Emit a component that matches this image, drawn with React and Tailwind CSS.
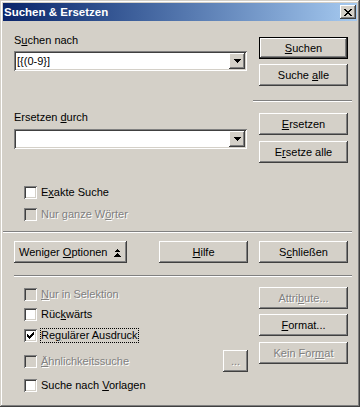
import React from 'react';

const bevel =
  'bg-[#d4d0c8] shadow-[inset_-1px_-1px_0_#404040,inset_1px_1px_0_#fff,inset_-2px_-2px_0_#808080,inset_2px_2px_0_#d4d0c8]';
const sunken =
  'shadow-[inset_1px_1px_0_#808080,inset_-1px_-1px_0_#fff,inset_2px_2px_0_#404040,inset_-2px_-2px_0_#d4d0c8]';
const grayText = 'text-[#808080] [text-shadow:1px_1px_0_#fff]';

function Btn({ children, def, disabled, className = 'w-[89px]' }) {
  return (
    <div
      className={`flex h-[22px] items-center justify-center leading-[13px] ${bevel} ${
        def ? 'border border-black' : ''
      } ${disabled ? grayText : 'text-black'} ${className}`}
    >
      <span className="whitespace-nowrap">{children}</span>
    </div>
  );
}

function Sep({ className = '' }) {
  return <div className={`h-[2px] border-t border-b border-t-[#808080] border-b-white ${className}`} />;
}

function Combo({ value }) {
  return (
    <div className={`flex h-[20px] w-[233px] items-center bg-white ${sunken}`}>
      <span className="flex-1 pl-[3px] leading-[13px]">{value}</span>
      <div className={`mr-[2px] flex h-[16px] w-[16px] items-center justify-center ${bevel}`}>
        <svg width="7" height="4" viewBox="0 0 7 4" shapeRendering="crispEdges">
          <path d="M0 0h7v1H0zM1 1h5v1H1zM2 2h3v1H2zM3 3h1v1H3z" fill="#000" />
        </svg>
      </div>
    </div>
  );
}

function Check({ children, checked, disabled, focus, className = '' }) {
  return (
    <div className={`flex h-[13px] items-center pl-[10px] ${className}`}>
      <div
        className={`flex h-[13px] w-[13px] shrink-0 items-center justify-center ${
          disabled ? 'bg-[#d4d0c8]' : 'bg-white'
        } ${sunken}`}
      >
        {checked ? (
          <svg width="7" height="7" viewBox="0 0 7 7" shapeRendering="crispEdges">
            <path
              d="M6 0h1v3H6zM5 1h1v3H5zM4 2h1v3H4zM3 3h1v3H3zM2 4h1v3H2zM1 3h1v3H1zM0 2h1v3H0z"
              fill="#000"
            />
          </svg>
        ) : null}
      </div>
      <span
        className={`ml-[4px] leading-[13px] whitespace-nowrap ${disabled ? grayText : 'text-black'} ${
          focus ? 'outline outline-dotted outline-black' : ''
        }`}
      >
        {children}
      </span>
    </div>
  );
}

export default function App() {
  return (
    <div className="h-[407px] w-[360px] overflow-hidden bg-[#d4d0c8] p-[3px] font-['Liberation_Sans',Arial,sans-serif] text-[11px] text-black shadow-[inset_-1px_-1px_0_#404040,inset_1px_1px_0_#d4d0c8,inset_-2px_-2px_0_#808080,inset_2px_2px_0_#fff]">
      {/* title bar */}
      <div className="flex h-[18px] items-start justify-between bg-linear-to-r from-[#0a246a] to-[#a6caf0]">
        <span className="pl-[1px] text-[11.5px] font-bold leading-[18px] text-white">Suchen &amp; Ersetzen</span>
        <div className={`mt-[2px] mr-[1px] flex h-[14px] w-[16px] items-center justify-center ${bevel}`}>
          <svg width="8" height="7" viewBox="0 0 8 7" shapeRendering="crispEdges">
            <path
              d="M0 0h2v1H0zM6 0h2v1H6zM1 1h2v1H1zM5 1h2v1H5zM2 2h4v1H2zM3 3h2v1H3zM2 4h4v1H2zM1 5h2v1H1zM5 5h2v1H5zM0 6h2v1H0zM6 6h2v1H6z"
              fill="#000"
            />
          </svg>
        </div>
      </div>

      {/* search / replace */}
      <div className="flex items-start">
        <div className="ml-[11px] w-[233px]">
          <div className="mt-[13px] h-[13px] leading-[13px]">
            S<u>u</u>chen nach
          </div>
          <div className="mt-[4px]">
            <Combo value="[{(0-9}]" />
          </div>
          <div className="mt-[40px] h-[13px] leading-[13px]">
            Ersetzen <u>d</u>urch
          </div>
          <div className="mt-[5px]">
            <Combo value="" />
          </div>
          <Check className="mt-[37px]">
            E<u>x</u>akte Suche
          </Check>
          <Check className="mt-[9px]" disabled>
            Nur ganze W<u>ö</u>rter
          </Check>
        </div>
        <div className="ml-[12px] w-[89px]">
          <Btn def className="mt-[16px] w-[89px]">
            <u>S</u>uchen
          </Btn>
          <Btn className="mt-[5px] w-[89px]">
            Suche <u>a</u>lle
          </Btn>
          <Sep className="mt-[14px] -ml-[6px] w-[99px]" />
          <Btn className="mt-[11px] w-[89px]">
            <u>E</u>rsetzen
          </Btn>
          <Btn className="mt-[6px] w-[89px]">
            E<u>r</u>setze alle
          </Btn>
        </div>
      </div>

      <Sep className="mt-[10px] w-[349px]" />

      {/* button row */}
      <div className="mt-[8px] flex pl-[11px]">
        <Btn className="w-[113px] !justify-start pl-[5px]">
          Weniger <u>O</u>ptionen
          <svg
            className="ml-[7px] inline-block align-[-1px]"
            width="7"
            height="8"
            viewBox="0 0 7 8"
            shapeRendering="crispEdges"
          >
            <path d="M3 0h1v1H3zM2 1h3v1H2zM1 2h5v1H1zM3 4h1v1H3zM2 5h3v1H2zM1 6h5v1H1zM0 7h7v1H0z" fill="#000" />
          </svg>
        </Btn>
        <Btn className="ml-[32px] w-[89px]">
          <u>H</u>ilfe
        </Btn>
        <Btn className="ml-[11px] w-[89px]">
          S<u>c</u>hließen
        </Btn>
      </div>

      <Sep className="mt-[12px] ml-[11px] w-[338px]" />

      {/* options */}
      <div className="flex items-start">
        <div className="ml-[11px] w-[234px]">
          <Check className="mt-[11px]" disabled>
            <u>N</u>ur in Selektion
          </Check>
          <Check className="mt-[7px]">
            Rüc<u>k</u>wärts
          </Check>
          <Check className="mt-[8px]" checked focus>
            Re<u>g</u>ulärer Ausdruck
          </Check>
          <div className="mt-[8px] flex h-[22px] items-center justify-between">
            <Check disabled>
              <u>Ä</u>hnlichkeitssuche
            </Check>
            <Btn disabled className="w-[25px] !items-end pb-[4px]">
              ...
            </Btn>
          </div>
          <Check className="mt-[7px]">
            Suche nach <u>V</u>orlagen
          </Check>
        </div>
        <div className="ml-[11px] w-[89px]">
          <Btn disabled className="mt-[10px] w-[89px]">
            Attri<u>b</u>ute...
          </Btn>
          <Btn className="mt-[5px] w-[89px]">
            <u>F</u>ormat...
          </Btn>
          <Btn disabled className="mt-[6px] w-[89px]">
            Kein For<u>m</u>at
          </Btn>
        </div>
      </div>
    </div>
  );
}
